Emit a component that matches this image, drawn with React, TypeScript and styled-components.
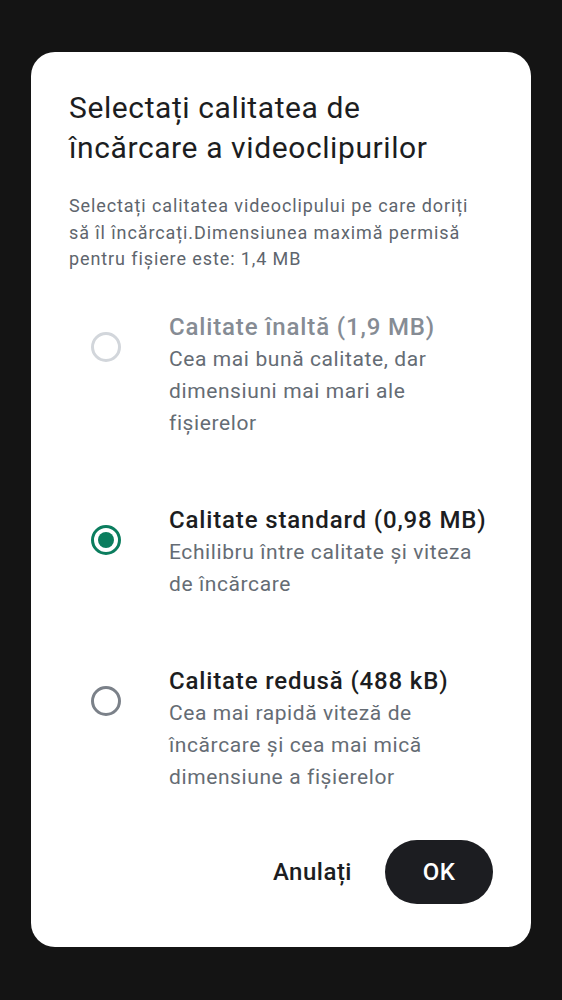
import React, { useState } from "react";
import styled, { createGlobalStyle } from "styled-components";

const Global = createGlobalStyle`
  html, body { margin: 0; padding: 0; background: #141414; }
  body { font-family: Roboto, "Noto Sans", Arial, sans-serif; -webkit-font-smoothing: antialiased; }
  * { box-sizing: border-box; }
`;

const Screen = styled.div`
  width: 562px;
  height: 1000px;
  padding: 52px 31px 53px;
  background: #141414;
`;

const Dialog = styled.div`
  width: 500px;
  height: 895px;
  background: #ffffff;
  border-radius: 24px;
  padding: 36px 38px 43px;
  display: flex;
  flex-direction: column;
`;

const Title = styled.h1`
  margin: 0;
  padding-right: 24px;
  font-size: 30px;
  line-height: 40px;
  font-weight: 400;
  letter-spacing: 0.6px;
  color: #1c1d21;
`;

const Description = styled.p`
  margin: 25px 0 0;
  font-size: 18px;
  line-height: 26.5px;
  letter-spacing: 0.9px;
  color: #5e656d;
`;

const Options = styled.div`
  margin-top: 38px;
  display: flex;
  flex-direction: column;
  gap: 65px;
`;

const Row = styled.label<{ $disabled?: boolean }>`
  display: flex;
  align-items: flex-start;
  gap: 48px;
  padding-left: 22px;
  cursor: ${(p) => (p.$disabled ? "default" : "pointer")};
`;

const Radio = styled.span<{ $checked?: boolean; $disabled?: boolean }>`
  flex: none;
  width: 30px;
  height: 30px;
  margin-top: 21px;
  border-radius: 50%;
  border: 3px solid
    ${(p) => (p.$checked ? "#0b7d5e" : p.$disabled ? "#d2d6db" : "#7b8189")};
  display: flex;
  align-items: center;
  justify-content: center;
  &::after {
    content: "";
    width: 16px;
    height: 16px;
    border-radius: 50%;
    background: #0b7d5e;
    display: ${(p) => (p.$checked ? "block" : "none")};
  }
`;

const Texts = styled.div`
  flex: 1;
  display: flex;
  flex-direction: column;
`;

const OptionTitle = styled.div<{ $disabled?: boolean }>`
  font-size: 24px;
  line-height: 32px;
  font-weight: 500;
  letter-spacing: 0.85px;
  color: ${(p) => (p.$disabled ? "#868c94" : "#1c1d21")};
`;

const OptionDesc = styled.div`
  font-size: 21px;
  line-height: 32px;
  letter-spacing: 0.6px;
  color: #656c74;
`;

const Actions = styled.div`
  margin-top: auto;
  display: flex;
  justify-content: flex-end;
  align-items: center;
  gap: 33px;
`;

const TextButton = styled.button`
  border: none;
  background: none;
  padding: 0;
  font-family: inherit;
  font-size: 24px;
  font-weight: 500;
  letter-spacing: 0.5px;
  color: #1c1d21;
  cursor: pointer;
`;

const FilledButton = styled.button`
  border: none;
  width: 108px;
  height: 64px;
  border-radius: 32px;
  background: #1c1d21;
  color: #ffffff;
  font-family: inherit;
  font-size: 24px;
  font-weight: 500;
  letter-spacing: 0.5px;
  cursor: pointer;
`;

const options = [
  {
    id: "high",
    title: "Calitate înaltă (1,9 MB)",
    desc: "Cea mai bună calitate, dar dimensiuni mai mari ale fișierelor",
    disabled: true,
  },
  {
    id: "standard",
    title: "Calitate standard (0,98 MB)",
    desc: "Echilibru între calitate și viteza de încărcare",
    disabled: false,
  },
  {
    id: "low",
    title: "Calitate redusă (488 kB)",
    desc: "Cea mai rapidă viteză de încărcare și cea mai mică dimensiune a fișierelor",
    disabled: false,
  },
];

export default function App() {
  const [selected, setSelected] = useState("standard");
  return (
    <>
      <Global />
      <Screen>
        <Dialog>
          <Title>Selectați calitatea de încărcare a videoclipurilor</Title>
          <Description>
            Selectați calitatea videoclipului pe care doriți să îl încărcați.Dimensiunea maximă permisă pentru fișiere este: 1,4 MB
          </Description>
          <Options>
            {options.map((o) => (
              <Row
                key={o.id}
                $disabled={o.disabled}
                onClick={() => !o.disabled && setSelected(o.id)}
              >
                <Radio $checked={selected === o.id} $disabled={o.disabled} />
                <Texts>
                  <OptionTitle $disabled={o.disabled}>{o.title}</OptionTitle>
                  <OptionDesc>{o.desc}</OptionDesc>
                </Texts>
              </Row>
            ))}
          </Options>
          <Actions>
            <TextButton>Anulați</TextButton>
            <FilledButton>OK</FilledButton>
          </Actions>
        </Dialog>
      </Screen>
    </>
  );
}
